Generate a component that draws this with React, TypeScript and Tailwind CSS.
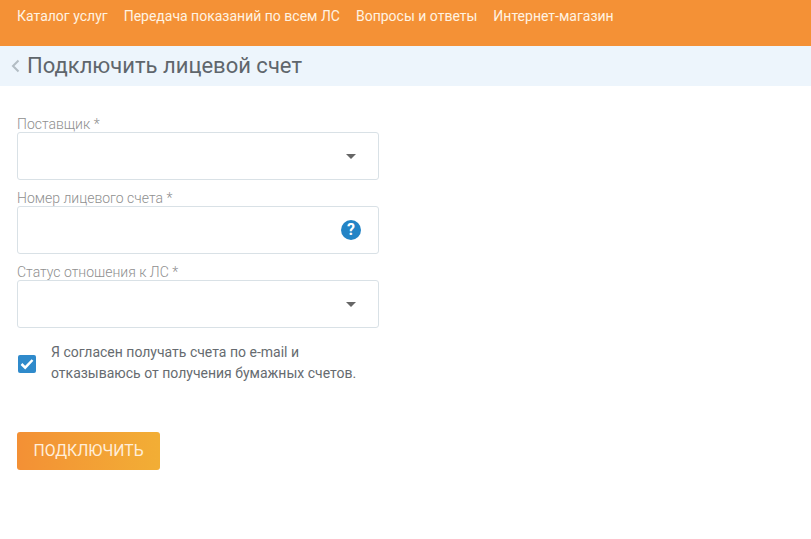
export default function App() {
  const font = { fontFamily: "Roboto, sans-serif" };
  const Label = ({ t }: { t: string }) => (
    <div className="h-[16px] text-[14px] leading-[17px] font-light text-[#8f8f8f]">{t}</div>
  );
  const Caret = () => (
    <div className="w-0 h-0 border-x-[5px] border-x-transparent border-t-[5px] border-t-[#666666]" />
  );
  const Field = ({ children }: { children: React.ReactNode }) => (
    <div className="w-[362px] h-[48px] border border-[#d9e1e6] rounded-[3px] bg-white flex items-center justify-end">
      {children}
    </div>
  );
  return (
    <div className="w-[811px] h-[539px] bg-white overflow-hidden" style={font}>
      <nav className="h-[46px] bg-[#f49136] pl-[17px] pt-[8px] flex gap-4 text-[14px] leading-[16px] font-normal text-[#fff3e2]">
        <span>Каталог услуг</span>
        <span>Передача показаний по всем ЛС</span>
        <span>Вопросы и ответы</span>
        <span>Интернет-магазин</span>
      </nav>
      <div className="h-[40px] bg-[#edf5fc] pl-[11px] flex items-center gap-[7px]">
        <svg width="9" height="14" viewBox="0 0 9 14" fill="none" stroke="#b3bdc4" strokeWidth="2">
          <path d="M7.5 1.5 L2 7 L7.5 12.5" />
        </svg>
        <h1 className="text-[22px] leading-[28px] text-[#5f666c]">Подключить лицевой счет</h1>
      </div>
      <main className="pl-[17px] pt-[30px]">
        <Label t="Поставщик *" />
        <Field><div className="mr-[22px]"><Caret /></div></Field>
        <div className="mt-[10px]"><Label t="Номер лицевого счета *" /></div>
        <Field>
          <div className="mr-[17px] w-[20px] h-[20px] rounded-full bg-[#2384c6] flex items-center justify-center text-white text-[16px] font-bold leading-none">?</div>
        </Field>
        <div className="mt-[10px]"><Label t="Статус отношения к ЛС *" /></div>
        <Field><div className="mr-[22px]"><Caret /></div></Field>
        <div className="mt-[14px] flex items-center gap-[15px]">
          <div className="ml-[1px] mt-[1px] w-[18px] h-[18px] rounded-[2px] bg-[#2f8acb] flex items-center justify-center">
            <svg width="14" height="12" viewBox="0 0 14 12" fill="none" stroke="white" strokeWidth="2.5">
              <path d="M1.5 6 L5.2 9.7 L12.5 2" />
            </svg>
          </div>
          <p className="text-[14px] leading-[21px] text-[#666b70]">
            Я согласен получать счета по e-mail и<br />отказываюсь от получения бумажных счетов.
          </p>
        </div>
        <button className="mt-[48px] w-[143px] h-[38px] rounded-[3px] bg-gradient-to-r from-[#f39035] to-[#f2ae35] text-[#ffeeda] text-[15.75px] font-normal flex items-center justify-center">
          ПОДКЛЮЧИТЬ
        </button>
      </main>
    </div>
  );
}
